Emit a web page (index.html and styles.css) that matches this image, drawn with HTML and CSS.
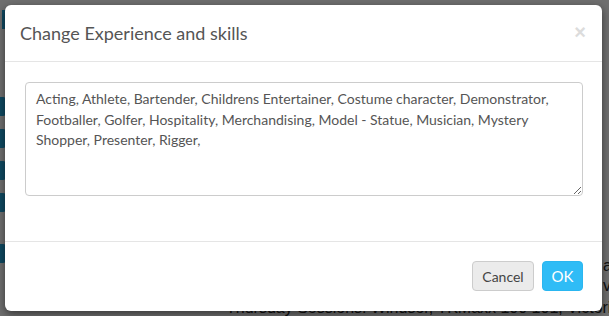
FILE: index.html
```html
<!DOCTYPE html>
<html lang="en">
<head>
    <meta charset="UTF-8">
    <meta name="viewport" content="width=device-width, initial-scale=1.0">
    <title>Change Experience and skills</title>
    <link rel="stylesheet" href="styles.css">
</head>
<body>
    <div class="page">
        <div class="tabs">
            <span class="tab tab-top"></span>
            <span class="tab tab-1"></span>
            <span class="tab"></span>
            <span class="tab"></span>
            <span class="tab"></span>
            <span class="tab tab-last"></span>
        </div>
        <div class="page-text">
            <p class="side-line">a</p>
            <p class="side-line">v</p>
            <p class="sessions">Thursday Sessions: Windsor, TKMaxx 100 101, Victorious Festival</p>
        </div>
    </div>

    <div class="backdrop"></div>

    <div class="modal">
        <div class="modal-header">
            <h4 class="modal-title">Change Experience and skills</h4>
            <button class="close" type="button">&times;</button>
        </div>
        <div class="modal-body">
            <textarea class="form-control" rows="5">Acting, Athlete, Bartender, Childrens Entertainer, Costume character, Demonstrator, Footballer, Golfer, Hospitality, Merchandising, Model - Statue, Musician, Mystery Shopper, Presenter, Rigger, </textarea>
        </div>
        <div class="modal-footer">
            <button class="btn btn-default" type="button">Cancel</button>
            <button class="btn btn-primary" type="button">OK</button>
        </div>
    </div>
</body>
</html>
```

FILE: styles.css
```css
body {
    margin: 0;
    font-family: Lato, "Open Sans", sans-serif;
    background-color: #dedede;
    overflow: hidden;
    height: 316px;
}
.page {
    position: relative;
    height: 316px;
}
.tabs {
    display: flex;
    flex-direction: column;
    padding-top: 10px;
    width: 6px;
}
.tab {
    display: block;
    width: 6px;
    height: 19px;
    margin-top: 13px;
    border-radius: 0 3px 3px 0;
    background-color: #1f93c2;
}
.tab-top {
    margin-top: 0;
    margin-left: 2px;
}
.tab-1 {
    margin-top: 68px;
}
.tab-last {
    margin-top: 32px;
}
.page-text {
    position: absolute;
    left: 226px;
    top: 256px;
    right: -200px;
    font-family: "Liberation Sans", Arial, sans-serif;
    font-size: 16px;
    color: #222;
}
.page-text p {
    margin: 0;
    line-height: 20px;
}
.side-line {
    padding-left: 377px;
}
.sessions {
    white-space: nowrap;
    margin-top: 2px !important;
}
.backdrop {
    position: absolute;
    left: 0;
    top: 0;
    right: 0;
    bottom: 0;
    background-color: rgba(0, 0, 0, 0.5);
}
.modal {
    position: absolute;
    left: 5px;
    top: 5px;
    width: 597px;
    height: 306px;
    background-color: #fff;
    border-radius: 6px;
    box-shadow: 0 3px 9px rgba(0, 0, 0, 0.5);
    display: flex;
    flex-direction: column;
    color: #555;
}
.modal-header {
    display: flex;
    align-items: center;
    justify-content: space-between;
    height: 56px;
    padding: 0 15px;
    border-bottom: 1px solid #e5e5e5;
}
.modal-title {
    margin: 0;
    font-size: 18px;
    font-weight: normal;
    color: #555;
}
.close {
    border: none;
    background: none;
    padding: 0;
    margin-top: -2px;
    margin-right: 1px;
    font-family: "Liberation Sans", Arial, sans-serif;
    font-size: 20px;
    font-weight: bold;
    line-height: 1;
    color: #dcdcdc;
}
.modal-body {
    padding: 20px 19px 0 20px;
    height: 159px;
    border-bottom: 1px solid #e5e5e5;
}
.form-control {
    display: block;
    box-sizing: border-box;
    width: 100%;
    height: 114px;
    padding: 6px 10px;
    border: 1px solid #ccc;
    border-radius: 4px;
    font-family: Lato, "Open Sans", sans-serif;
    font-size: 14px;
    line-height: 20.5px;
    color: #555;
    resize: vertical;
}
.modal-footer {
    display: flex;
    justify-content: flex-end;
    gap: 8px;
    padding: 19px 19px 0 0;
}
.btn {
    height: 30px;
    padding: 0 9px;
    border-radius: 4px;
    font-family: Lato, "Open Sans", sans-serif;
    font-size: 14px;
    cursor: pointer;
}
.btn-default {
    width: 62px;
    background-color: #ebebeb;
    border: 1px solid #ccc;
    color: #444;
}
.btn-primary {
    width: 41px;
    padding: 0;
    background-color: #2fbcf6;
    border: 1px solid #2ab6f0;
    color: #fff;
    font-size: 15px;
}
```
